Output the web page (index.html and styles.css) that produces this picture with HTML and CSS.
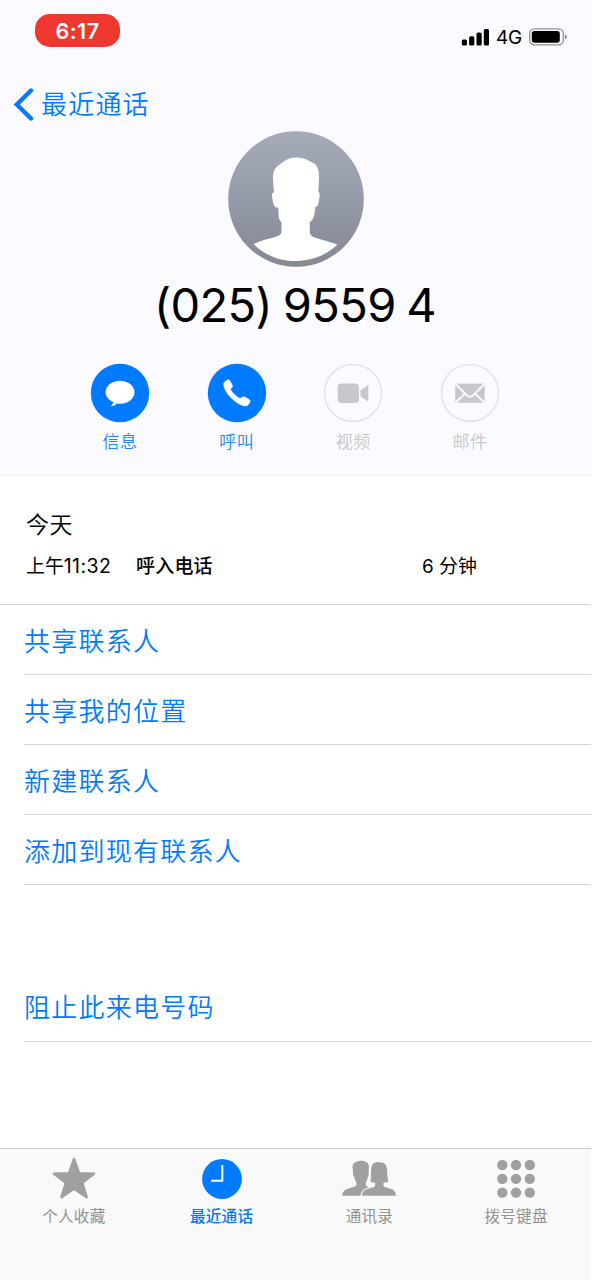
FILE: index.html
```html
<!DOCTYPE html>
<html lang="zh-CN">
<head>
<meta charset="utf-8">
<title>最近通话</title>
<link rel="stylesheet" href="styles.css">
</head>
<body>
<div class="phone">
  <header class="header">
    <div class="status">
      <span class="time">6:17</span>
      <div class="indicators">
        <svg class="signal" width="28" height="18" viewBox="0 0 28 18"><rect x="0.8" y="11.5" width="5.2" height="6" rx="1.5"/><rect x="8.1" y="8.3" width="5.2" height="9.2" rx="1.5"/><rect x="15.5" y="4.6" width="5.2" height="12.9" rx="1.5"/><rect x="22.8" y="1" width="5.2" height="16.5" rx="1.5"/></svg>
        <span class="network">4G</span>
        <svg class="battery" width="39" height="18" viewBox="0 0 39 18"><rect x="0.7" y="0.9" width="33.6" height="16" rx="4.6" fill="none" stroke="#929296" stroke-width="1.3"/><rect x="2.8" y="3" width="28" height="11.8" rx="2.7"/><path d="M36 6.2Q38 7.2 38 9T36 11.8Z" fill="#929296"/></svg>
      </div>
    </div>
    <a class="back">
      <svg width="22" height="34" viewBox="0 0 22 34"><path d="M19 2.5L4.8 16.5L19 30.5" fill="none" stroke="#007aff" stroke-width="4.4" stroke-linecap="round" stroke-linejoin="miter"/></svg>
      <span>最近通话</span>
    </a>
    <svg class="avatar" width="136" height="136" viewBox="0 0 136 136">
      <defs><linearGradient id="shade" x2="0" y2="1"><stop stop-color="#a5abb9"/><stop offset="1" stop-color="#848994"/></linearGradient></defs>
      <circle cx="68" cy="68" r="67.8" fill="url(#shade)"/>
      <path fill="#fff" d="M52 33.5C57 28.5 62 26.5 68 26.4C75 26.5 79.5 28.5 83 31C88.5 32.5 91 37 91 46C91 51 90.6 56 90.3 61C92.2 61 91.8 65 91 69C90.2 74 89.5 76 87.4 76C86.5 81 87 88 81.8 91V101Q81.9 104.5 86 106.2C94 109 103 110.8 109.5 113.5C98 124.5 83 130 67 130C50.5 130 36 123.5 25.5 113C33 109.5 42 107.5 49 105.2Q53.2 104 53.5 101V91.3C49.5 88 51 82 50.2 76.5H47.4C45.2 73.5 44.5 69 44 65Q43.6 61 46 61.5C45.4 52 44 45 46 40Q48 35 52 33.5Z"/>
    </svg>
    <h1 class="number">(025) 9559 4</h1>
    <nav class="actions">
      <a class="action">
        <svg width="60" height="60" viewBox="0 0 60 60"><circle cx="30" cy="30" r="29.2" fill="#007aff"/><path fill="#fff" d="M30 17.8C38 17.8 44.5 22.8 44.5 29.2C44.5 35.8 38 40.8 30 40.8L27 40.5C25.5 42.2 23.5 43 20.6 43.2C22.2 42.1 23.2 40.6 23.1 39C18.6 37 15.6 33.5 15.6 29.2C15.6 22.8 22 17.8 30 17.8Z"/></svg>
        <span>信息</span>
      </a>
      <a class="action">
        <svg width="60" height="60" viewBox="0 0 60 60"><circle cx="30" cy="30" r="29.2" fill="#007aff"/><path fill="#fff" d="M17.5 19.2L20.5 17Q21.8 16.3 22.7 17.6L25.2 22.2Q25.8 23.4 24.8 24.3L23.4 26.2C24.2 28.6 29.8 34.2 33 35.6L35.3 34.3Q36.2 33.4 37.5 34L42.1 36.6Q43.6 37.5 42.8 39.1L41.5 41.3Q40.5 43 38 42.8C28.5 41.5 17 29 16.8 21.4Q16.7 20 17.5 19.2Z" stroke="#fff" stroke-width=".8"/></svg>
        <span>呼叫</span>
      </a>
      <a class="action disabled">
        <svg width="60" height="60" viewBox="0 0 60 60"><circle cx="30" cy="30" r="28.5" fill="none" stroke="#e3e3e8" stroke-width="1.5"/><rect x="14.7" y="20.6" width="21.3" height="19.4" rx="4" fill="#c7c7cc"/><path d="M37.5 27.2L45.4 21.7V38.8L37.5 33.3Z" fill="#c7c7cc"/></svg>
        <span>视频</span>
      </a>
      <a class="action disabled">
        <svg width="60" height="60" viewBox="0 0 60 60"><circle cx="30" cy="30" r="28.5" fill="none" stroke="#e3e3e8" stroke-width="1.5"/><rect x="15.2" y="20.6" width="29.5" height="19.2" fill="#c7c7cc"/><path d="M15 20.5L26.5 32Q30 35.4 33.5 32L45 20.5M15 40.2L25 30.6M45 40.2L35 30.6" fill="none" stroke="#fafaff" stroke-width="1.9"/></svg>
        <span>邮件</span>
      </a>
    </nav>
  </header>
  <section class="log">
    <h2 class="day">今天</h2>
    <div class="call"><span class="when">上午<span class="digits">11:32</span></span><strong class="kind">呼入电话</strong><span class="length">6 分钟</span></div>
  </section>
  <ul class="options">
    <li>共享联系人</li>
    <li>共享我的位置</li>
    <li>新建联系人</li>
    <li>添加到现有联系人</li>
    <li class="block">阻止此来电号码</li>
  </ul>
  <footer class="tabs">
    <a class="tab">
      <svg width="56" height="44" viewBox="0 0 56 44"><path d="M28 3L33.2 17.2L48 17.7L36.3 26.7L40.7 41.2L28 32.7L15.4 41.2L19.9 26.7L8 17.7L22.9 17.2Z" fill="#a0a0a0" stroke="#a0a0a0" stroke-width="2.4" stroke-linejoin="round"/></svg>
      <span>个人收藏</span>
    </a>
    <a class="tab active">
      <svg width="56" height="44" viewBox="0 0 56 44"><circle cx="28" cy="23" r="19.9" fill="#007aff"/><path d="M28.3 9V24.8H17" fill="none" stroke="#fff" stroke-width="2"/></svg>
      <span>最近通话</span>
    </a>
    <a class="tab">
      <svg width="56" height="44" viewBox="0 0 56 44"><g fill="#a0a0a0"><path d="M12.2 8C14 5.5 18 4.2 21.5 4.8C25.5 5.2 28 7.3 28 11.5L27.5 17C28.2 19 27.3 21 26.5 21.8C26.5 24.5 25.4 25.8 24.8 26.5V29Q25 30.2 27.5 31L23.2 33.2Q20.2 35 19.3 39.8H1.2C1.4 35.2 4 33.5 8 32.4C12 31 15.2 30.6 15.4 28.8V26.2C14 24.8 13.7 23.4 13.5 21.6C12 20 11.5 18 12.2 16.5C11.6 13 11 10.5 12.2 8Z"/><path d="M31 9.5C32.2 6.7 35.5 5.8 38.5 6.2C44 6.1 45.8 9 46.1 14.5C46.2 19 46.4 22.5 47.5 25.2Q45.5 26.8 42.4 26.8V29.3C43 31.3 46 31.8 49.5 32.8C53 33.7 54.8 35.5 55 39.8H20.9C21 36 23 34 26 33C30 31.7 33.8 31.5 34.2 29.5V26.8Q31.5 26.8 29.4 25.4C30.6 21.5 29.3 13.5 31 9.5Z"/></g></svg>
      <span>通讯录</span>
    </a>
    <a class="tab">
      <svg width="56" height="44" viewBox="0 0 56 44"><g fill="#a0a0a0"><circle cx="13.3" cy="9" r="5.2"/><circle cx="27" cy="9" r="5.2"/><circle cx="40.8" cy="9" r="5.2"/><circle cx="13.3" cy="22.9" r="5.2"/><circle cx="27" cy="22.9" r="5.2"/><circle cx="40.8" cy="22.9" r="5.2"/><circle cx="13.3" cy="36.6" r="5.2"/><circle cx="27" cy="36.6" r="5.2"/><circle cx="40.8" cy="36.6" r="5.2"/></g></svg>
      <span>拨号键盘</span>
    </a>
  </footer>
</div>
</body>
</html>
```

FILE: styles.css
```css
* { box-sizing: border-box; }
body { margin: 0; background: #fff; font-family: Inter, "Noto Sans CJK SC", sans-serif; color: #000; }
svg { display: block; flex: none; }
.phone { width: 591px; height: 1280px; display: flex; flex-direction: column; overflow: hidden; white-space: nowrap; }
.header { height: 476px; background: #fafaff; border-bottom: 1px solid #f1f1f4; display: flex; flex-direction: column; align-items: center; }
.status { width: 100%; height: 60px; padding: 14px 23px 0 35px; display: flex; justify-content: space-between; align-items: flex-start; }
.time { width: 85px; height: 33px; border-radius: 15px; background: #ee372f; color: #fff; font-size: 21.5px; font-weight: 600; line-height: 35px; text-align: center; letter-spacing: 0.5px; }
.indicators { display: flex; align-items: center; padding-top: 13px; height: 32px; }
.network { width: 27px; margin: 2px 6px 0 7px; font-size: 19px; line-height: 20px; letter-spacing: -0.2px; }
.back { width: 100%; height: 70px; padding: 20px 0 0 12px; display: flex; align-items: center; color: #007aff; font-size: 26px; font-weight: 350; line-height: 36px; letter-spacing: 1.2px; gap: 7px; }
.avatar { margin-top: 1px; }
.number { margin: 8px 0 0; padding-right: 1px; height: 60px; font-size: 47px; line-height: 60px; font-weight: 400; letter-spacing: -0.6px; word-spacing: -2px; }
.actions { margin-top: 28px; padding-right: 1px; display: flex; gap: 56.6px; }
.action { width: 60px; display: flex; flex-direction: column; align-items: center; color: #2287f5; font-size: 17px; font-weight: 350; line-height: 24px; gap: 7px; letter-spacing: 0.5px; }
.disabled { color: #c7c7cc; }
.log { height: 129px; padding: 31px 26px 0; border-bottom: 1px solid #d5d5d7; }
.day { margin: 0; font-size: 23px; font-weight: 350; line-height: 37px; letter-spacing: 0.5px; }
.call { margin-top: 8px; display: flex; font-size: 18.9px; font-weight: 400; line-height: 30px; }
.when { width: 110px; }
.digits { font-size: 19.5px; line-height: 1; letter-spacing: 0.4px; }
.kind { width: 286px; font-size: 19px; font-weight: 500; letter-spacing: 0.2px; }
.options { margin: 0 0 0 24px; padding: 0; list-style: none; height: 543px; }
.options li { height: 70px; border-bottom: 1px solid #d5d5d7; color: #007aff; font-size: 26px; font-weight: 350; line-height: 73px; letter-spacing: 1.25px; }
.options .block { margin-top: 87px; line-height: 72px; }
.tabs { height: 132px; border-top: 1px solid #cbcbcd; background: #f9f9f9; display: grid; grid-template-columns: repeat(4, 1fr); padding-top: 7px; }
.tab { display: flex; flex-direction: column; align-items: center; color: #929292; font-size: 15.6px; line-height: 22px; gap: 6px; letter-spacing: 0.2px; }
.tab:last-child { padding-right: 2px; }
.tab:last-child svg { margin-left: 2px; }
.active { color: #007aff; font-weight: 500; }
```
